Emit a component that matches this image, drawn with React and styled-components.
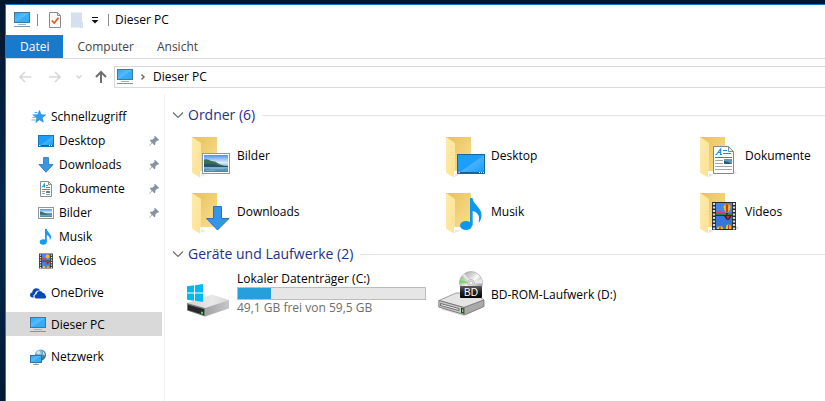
import React from "react";
import styled, { createGlobalStyle } from "styled-components";

const App = () => {
  const [selected, setSelected] = React.useState("Dieser PC");

  return (
    <Desktop>
      <GlobalStyle />
      <Gradients />
      <Window>
        <TitleBar>
          <PcIcon />
          <Separator />
          <ToolButton aria-label="Eigenschaften">
            <PropertiesIcon />
          </ToolButton>
          <ToolButton aria-label="Neuer Ordner">
            <NewFolderIcon />
          </ToolButton>
          <ToolButton aria-label="Symbolleiste anpassen" $narrow>
            <CustomizeIcon />
          </ToolButton>
          <Separator />
          <Title>Dieser PC</Title>
        </TitleBar>

        <Ribbon>
          <FileTab>Datei</FileTab>
          <Tab>Computer</Tab>
          <Tab>Ansicht</Tab>
        </Ribbon>

        <NavBar>
          <NavButton aria-label="Zurück" disabled>
            <ArrowIcon />
          </NavButton>
          <NavButton aria-label="Vorwärts" disabled>
            <ArrowIcon angle={180} />
          </NavButton>
          <NavButton aria-label="Zuletzt besucht" disabled $narrow>
            <ChevronIcon />
          </NavButton>
          <NavButton aria-label="Nach oben">
            <ArrowIcon angle={90} heavy />
          </NavButton>
          <AddressBar>
            <PcIcon />
            <CrumbArrow aria-label="Ordner anzeigen">
              <ChevronIcon angle={-90} />
            </CrumbArrow>
            <Crumb>Dieser PC</Crumb>
          </AddressBar>
        </NavBar>

        <Body>
          <Sidebar>
            {navGroups.map((group) => (
              <NavGroup key={group[0].name}>
                {group.map(({ name, Icon, nested, pinned }) => (
                  <li key={name}>
                    <NavItem
                      $nested={nested}
                      $active={selected === name}
                      onClick={() => setSelected(name)}
                    >
                      <Icon />
                      <NavLabel>{name}</NavLabel>
                      {pinned && <PinIcon />}
                    </NavItem>
                  </li>
                ))}
              </NavGroup>
            ))}
          </Sidebar>

          <Content>
            <Section>
              <SectionHeader title="Ordner (6)" />
              <Grid>
                {folders.map(({ name, Overlay }) => (
                  <Tile key={name}>
                    <FolderIcon>
                      <Overlay />
                    </FolderIcon>
                    <span>{name}</span>
                  </Tile>
                ))}
              </Grid>
            </Section>

            <Section>
              <SectionHeader title="Geräte und Laufwerke (2)" />
              <Grid>
                <Tile>
                  <HardDriveIcon />
                  <DriveInfo>
                    <span id="drive-c">Lokaler Datenträger (C:)</span>
                    <Usage aria-labelledby="drive-c" max={59.5} value={10.4} />
                    <FreeSpace>49,1 GB frei von 59,5 GB</FreeSpace>
                  </DriveInfo>
                </Tile>
                <Tile>
                  <BdDriveIcon />
                  <span>BD-ROM-Laufwerk (D:)</span>
                </Tile>
              </Grid>
            </Section>
          </Content>
        </Body>
      </Window>
    </Desktop>
  );
};

const SectionHeader = ({ title }) => (
  <Heading>
    <HeadingButton>
      <svg width="12" height="8" viewBox="0 0 12 8" aria-hidden="true">
        <path d="M1 1.500 6 6.500 11 1.500" fill="none" stroke="#6d6d6d" strokeWidth="1.2" />
      </svg>
      {title}
    </HeadingButton>
  </Heading>
);

/* ---------- icons ---------- */

const Small = ({ children }) => (
  <svg width="16" height="16" viewBox="0 0 16 16" aria-hidden="true">
    {children}
  </svg>
);

// fills shared by all icons
const Gradients = () => (
  <Defs aria-hidden="true">
    <defs>
      <linearGradient id="screen" x1="0" y1="0" x2="1" y2="1">
        <stop offset="0" stopColor="#2fa3f2" />
        <stop offset="0.5" stopColor="#57bdfb" />
        <stop offset="0.51" stopColor="#36aefa" />
        <stop offset="1" stopColor="#2fa9f8" />
      </linearGradient>
      <linearGradient id="desk" x1="0" y1="0" x2="1" y2="1">
        <stop offset="0" stopColor="#18a0fb" />
        <stop offset="0.5" stopColor="#1c9efc" />
        <stop offset="0.52" stopColor="#46b2fd" />
        <stop offset="1" stopColor="#1499f8" />
      </linearGradient>
      <linearGradient id="folderBack" x1="0" y1="0" x2="1" y2="1">
        <stop offset="0" stopColor="#e6c15e" />
        <stop offset="1" stopColor="#fbdf8c" />
      </linearGradient>
      <linearGradient id="folderFront" x1="0" y1="0" x2="1" y2="1">
        <stop offset="0" stopColor="#ffebad" />
        <stop offset="1" stopColor="#fde196" />
      </linearGradient>
      <linearGradient id="sky" x1="0" y1="0" x2="0" y2="1">
        <stop offset="0" stopColor="#4d92ed" />
        <stop offset="0.45" stopColor="#dcedfb" />
        <stop offset="0.6" stopColor="#9cc6e0" />
        <stop offset="1" stopColor="#3f83ad" />
      </linearGradient>
      <linearGradient id="diskTop" x1="0" y1="0" x2="1" y2="0">
        <stop offset="0" stopColor="#d2d2d3" />
        <stop offset="0.6" stopColor="#e9e9ea" />
        <stop offset="1" stopColor="#d6d6d8" />
      </linearGradient>
      <linearGradient id="diskSide" x1="0" y1="0" x2="1" y2="0">
        <stop offset="0" stopColor="#a3a3a5" />
        <stop offset="1" stopColor="#c6c6c8" />
      </linearGradient>
      <linearGradient id="disc" x1="0" y1="0" x2="1" y2="1">
        <stop offset="0" stopColor="#9a9a9a" />
        <stop offset="0.35" stopColor="#d5d5d5" />
        <stop offset="0.5" stopColor="#fafafa" />
        <stop offset="0.7" stopColor="#b5b5b5" />
        <stop offset="1" stopColor="#8b8b8b" />
      </linearGradient>
      <linearGradient id="badge" x1="0" y1="0" x2="0" y2="1">
        <stop offset="0" stopColor="#5c5c5c" />
        <stop offset="0.5" stopColor="#222222" />
        <stop offset="1" stopColor="#050505" />
      </linearGradient>
      <radialGradient id="globe" cx="0.4" cy="0.3" r="0.8">
        <stop offset="0" stopColor="#b9dcea" />
        <stop offset="0.5" stopColor="#4f92b4" />
        <stop offset="1" stopColor="#235f86" />
      </radialGradient>
    </defs>
  </Defs>
);

const PcIcon = () => (
  <Small>
    <rect x="0.5" y="0.5" width="15" height="10" fill="url(#screen)" stroke="#40799f" />
    <path d="M4 12.5h8" stroke="#9eb3c2" />
    <path d="M0 14.5h16" stroke="#7b96a9" />
  </Small>
);

const PropertiesIcon = () => (
  <Small>
    <path d="M2.5.5h8l3 3v12h-11z" fill="#fafafa" stroke="#8c8c8c" />
    <path d="M10.5.5v3h3" fill="none" stroke="#8c8c8c" />
    <path d="M4.8 8.5 7.2 11 11.5 5.8" fill="none" stroke="#e3591b" strokeWidth="1.8" />
  </Small>
);

const NewFolderIcon = () => (
  <Small>
    <path d="M2 0.500h11v10l1 1v4H2z" fill="#d5dfef" />
    <path d="M11.500 15.500v-4l2-1v5z" fill="#e8eef7" stroke="#c3d0e4" strokeWidth="0.6" />
  </Small>
);

const CustomizeIcon = () => (
  <svg width="8" height="8" viewBox="0 0 8 8" aria-hidden="true">
    <path d="M1 1.500h6" stroke="#111" />
    <path d="M0.500 4h7L4 7.500z" fill="#111" />
  </svg>
);

const ArrowIcon = ({ angle = 0, heavy }) => (
  <svg width="14" height="14" viewBox="0 0 14 14" aria-hidden="true">
    <path
      d="M13 7H2M7 2 2 7l5 5"
      fill="none"
      stroke="currentColor"
      strokeWidth={heavy ? 2 : 1.5}
      transform={`rotate(${angle} 7 7)`}
    />
  </svg>
);

const ChevronIcon = ({ angle = 0 }) => (
  <svg width="8" height="8" viewBox="0 0 8 8" aria-hidden="true">
    <path
      d="M1.500 2.500 4 5l2.500-2.500"
      fill="none"
      stroke="currentColor"
      strokeWidth="1.5"
      transform={`rotate(${angle} 4 4)`}
    />
  </svg>
);

const PinIcon = () => (
  <svg width="12" height="12" viewBox="0 0 12 12" aria-hidden="true">
    <path
      d="M7 .8 11.200 5 10 5.800 9.300 5.600 7.400 7.500 7.200 9.800 6.300 10.200 4.200 8 1.500 10.800 1 11 1.200 10.400 3.700 7.500 1.800 5.500 2.300 4.700 4.600 4.500 6.500 2.700 6.300 1.800z"
      fill="#8592a0"
    />
  </svg>
);

const StarIcon = () => (
  <Small>
    <path
      d="m9.500 1.500 1.600 4.200 4.500.2-3.500 2.900 1.300 4.400-3.900-2.400L5.800 13.500l1-4.500-3.500-3 4.600-.3z"
      fill="#2b9df0"
      stroke="#1d7fc9"
      strokeWidth="0.6"
    />
    <path d="M4.500 3.500h3M2.500 6h3M2.500 8.500h3M1.500 11h4" stroke="#5ab4f2" />
  </Small>
);

const DesktopIcon = () => (
  <Small>
    <rect x="0.5" y="2.500" width="15" height="11" fill="url(#desk)" stroke="#1577b7" />
    <path d="M1 12.500h14" stroke="#0f5f9b" />
    <path d="M1 12.500h1.500M11 12.500h1M13 12.500h1" stroke="#fff" />
  </Small>
);

const DownloadIcon = () => (
  <Small>
    <path
      d="M5.500 .5h5v7h4.600L8 15.200.9 7.500h4.600z"
      fill="#3a96e4"
      stroke="#2675bd"
      strokeWidth="0.8"
    />
  </Small>
);

const DocumentIcon = () => (
  <Small>
    <path d="M2.500.5h8l3 3v12h-11z" fill="#fff" stroke="#8c8f91" />
    <path d="M10.500.5v3h3" fill="none" stroke="#8c8f91" />
    <path d="m4 6.500 2.500-4v4M5 5.500h2M8 4.500h2M4 8.500h8M8 6.500h4" fill="none" stroke="#3195d8" />
    <path d="M4 10.500h3M4 12.500h3M8 13.500h4" stroke="#9a9a9a" />
    <rect x="8" y="10" width="4" height="2" fill="#52889f" />
  </Small>
);

const PictureIcon = () => (
  <Small>
    <rect x="0.5" y="2.500" width="15" height="11" fill="#fff" stroke="#8f979d" />
    <rect x="2" y="4" width="12" height="8" fill="url(#sky)" />
    <path d="M2 6.500c3 0 5 2 9 3H2z" fill="#3f7068" />
    <path d="M2 9h12" stroke="#2f6678" />
  </Small>
);

const MusicIcon = () => (
  <Small>
    <ellipse cx="5.200" cy="13" rx="3.500" ry="2.700" fill="#159af0" />
    <path
      d="M7 0h1.800c.3 3 4.200 4.500 4.200 8 0 1.500-.5 2.500-1.200 3.200.4-2.700-.8-4.300-3-5.200V13H7z"
      fill="#159af0"
    />
  </Small>
);

const VideoIcon = () => (
  <Small>
    <rect x="1" y="0.500" width="14" height="15" fill="#3b3b3b" />
    <rect x="4" y="1" width="8" height="6.500" fill="#5583cf" />
    <rect x="4" y="8.500" width="8" height="6.500" fill="#4b7ed4" />
    <path d="M2.500 1.500v14M13.500 1.500v14" stroke="#e8e8e8" strokeWidth="1.3" strokeDasharray="1.300 1.200" />
    <circle cx="9.500" cy="3.500" r="2" fill="#eeba24" />
    <path d="M4 5.500c2-1 4 0 5 1.500H4z" fill="#bd4a6a" />
    <path d="M8 9h3.500l-1.700 2.500z" fill="#a32a22" />
    <circle cx="6" cy="14" r="1.200" fill="#eeba24" />
    <circle cx="10" cy="14" r="1.200" fill="#e6a61f" />
  </Small>
);

const OneDriveIcon = () => (
  <Small>
    <path
      d="M4 12.500H2.600C1 12.500 0 11.400 0 10c0-1.300.9-2.300 2.200-2.500C2.200 5 4 3.300 6.300 3.300c1.700 0 3.100.9 3.800 2.200-3-.5-5 1.200-5.200 3.500C3.200 9.600 3 11.400 4 12.500z"
      fill="#094ab2"
    />
    <path
      d="M6.800 13.500c-1.400 0-2.300-.9-2.300-2.100s.9-2 2-2.100c0-2 1.400-3.300 3.200-3.300 1.500 0 2.600.8 3.100 2.100 1.700-.1 2.600 1.100 2.500 2.300.7.200.9.800.9 1.400 0 1-.7 1.700-1.700 1.700z"
      fill="#094ab2"
    />
  </Small>
);

const NetworkIcon = () => (
  <Small>
    <circle cx="10.500" cy="6" r="5.500" fill="url(#globe)" />
    <path d="M8 1.500c1.500 1 2.500 1 2 2.500S7 5 6 4.500zM13 2.500c1 1 2 2.500 2 4-1 0-2-1-2-2z" fill="#cfe8ee" />
    <rect x="0.500" y="6.500" width="11" height="7" fill="url(#screen)" stroke="#32749d" />
    <path d="M3 15.500h6" stroke="#8ba2b2" />
    <path d="M6 13.500v1.500" stroke="#8ba2b2" />
  </Small>
);

const FolderIcon = ({ children }) => (
  <svg width="48" height="48" viewBox="0 0 48 48" aria-hidden="true">
    <path d="M17 45l5-2.500-5-1z" fill="#e6e6e6" />
    <path d="M8 5h25v34H14z" fill="url(#folderBack)" />
    <path
      d="M8 5l8.500 5.500q.5.500.5 1.500v26l-1 1v6.500L8.500 41Q8 40.500 8 40z"
      fill="url(#folderFront)"
    />
    {children}
  </svg>
);

const PictureOverlay = () => (
  <>
    <rect x="18.500" y="21.500" width="27" height="20" fill="#fff" stroke="#8f979e" />
    <rect x="20" y="23" width="24" height="17" fill="url(#sky)" />
    <path d="M20 27.500q4-1 7 1.500 4-.5 8 3l5 2H20z" fill="#3b6f55" />
    <path d="M20 32q9-1 15 1.500l9 .5v1H20z" fill="#285364" />
    <path d="M26 36.500h14M22 38.500h9" stroke="#8db9cf" strokeWidth="0.6" />
  </>
);

const DesktopOverlay = () => (
  <>
    <rect x="19.500" y="22.500" width="27" height="19" fill="url(#desk)" stroke="#156a9f" />
    <path d="M20 40.500h26" stroke="#0d629d" />
    <path d="M20.500 40.500h1.200M41 40.500h1M43 40.500h1M45 40.500h1" stroke="#fff" />
  </>
);

const DocumentOverlay = () => (
  <>
    <path d="M42 39l3 2-2 1z" fill="#dedede" />
    <path d="M21.500 14.500h15l5 5v22h-20z" fill="#fff" stroke="#85898c" />
    <path d="M36.500 14.500v5h5z" fill="#e9ecee" stroke="#85898c" />
    <path
      d="M23.500 22.500h1.500M24.500 22.500l4.200-5.500v5.500M26 20.500h3M28 22.500h2"
      fill="none"
      stroke="#1c87cb"
      strokeWidth="1.1"
    />
    <path d="M31 18.500h4M31 21.500h8M23 25.500h17" stroke="#1c8fdb" />
    <path d="M23 28.500h8M23 31.500h8M23 34.500h17M23 37.500h17" stroke="#a6a6a6" />
    <rect x="32" y="27" width="8" height="5" fill="#5b9bc6" />
    <path d="M32 29q4 0 8 3h-8z" fill="#2f5f66" />
  </>
);

const DownloadOverlay = () => (
  <path d="M29.500 18.500h8v12h7.500L33.500 42 22.500 30.500h7z" fill="#3596e8" stroke="#2474b8" />
);

const MusicOverlay = () => (
  <>
    <ellipse cx="28" cy="37.500" rx="6" ry="4.500" fill="#0f97f0" />
    <path
      d="M32 10h2.500c.5 6 9 9.500 9 17 0 3-1 5.500-2.500 7.500q-.5-.5-.3-1c1.500-6-1.500-9.500-6-10.500V37.500H32z"
      fill="#0f97f0"
    />
  </>
);

const Balloon = ({ x, y }) => (
  <g transform={`translate(${x} ${y})`}>
    <path d="M-3.500 0a3.500 3.500 0 0 1 7 0Q3 3 1 5h-2Q-3 3-3.500 0z" fill="#f0c021" />
    <path d="M-1.300-3.200h2.600L1 5h-2z" fill="#c83c1f" />
    <rect x="-1" y="5.500" width="2" height="1.500" fill="#3a2a1a" />
  </g>
);

const VideoOverlay = () => (
  <>
    <path d="M44 38l3 2-3 2z" fill="#dedede" />
    <rect x="20" y="14" width="24" height="28" fill="#2b2b2b" />
    <path d="M22 15v27M42 15v27" stroke="#d9d9d9" strokeWidth="2.200" strokeDasharray="2 1.500" />
    <rect x="24" y="15" width="16" height="12" fill="#4187e8" />
    <rect x="24" y="28" width="16" height="13" fill="#3576dc" />
    <path d="M24 24q4-3 8 0t8 0v3H24z" fill="#c64a86" />
    <path d="M24 25.500h16V27H24z" fill="#3c7a3c" />
    <Balloon x={35} y={19.5} />
    <path d="M33 28h6l-2 4h-2z" fill="#b23327" />
    <path d="M32 28h2l2 4h-1zM38 28h1.500L37 32h-1z" fill="#2b1c3d" />
    <path d="M25 41a3 3 0 0 1 6 0zM34 41v-2a2.500 2.500 0 0 1 5 0v2z" fill="#f0c021" />
    <path d="M27.300 38.300h1.400V41h-1.400zM36 36.800h1.200V41H36z" fill="#c83c1f" />
  </>
);

const HardDriveIcon = () => (
  <svg width="48" height="48" viewBox="0 0 48 48" aria-hidden="true">
    <path d="M3 32l25-8.500L45 29l-24 8z" fill="url(#diskTop)" />
    <path d="M21 37l24-8v8.500l-24 8z" fill="url(#diskSide)" />
    <path d="M3 32l18 5v8.500L3 39.500z" fill="#77787b" />
    <path d="M4 33.700l16 4.500v5.700L4 38.900z" fill="#26282a" />
    <path d="M17 40.500l2 .6v2l-2-.6z" fill="#4be34b" />
    <path
      d="M3 15.300l7-1v7.200H3zM11 14.200l8-1.200v8.500h-8zM3 22.500h7v7.200l-7-1zM11 22.500h8V31l-8-1.200z"
      fill="#00b9f2"
    />
  </svg>
);

const BdDriveIcon = () => (
  <svg width="48" height="48" viewBox="0 0 48 48" aria-hidden="true">
    <path d="M2 38l24 7 20-9v-3z" fill="#d8d8d8" />
    <path d="M1 29.500L18 22h18l10 7-20 7.500z" fill="#e4e4e4" stroke="#8a8a8a" strokeWidth="0.8" />
    <path d="M26 36.500L46 29v6.500L27.500 43.500 26 43.300z" fill="#a9a9a9" stroke="#777" strokeWidth="0.8" />
    <path d="M.8 29.500L26 36.500v7L.8 36z" fill="#c9c9c9" stroke="#666" strokeWidth="0.8" />
    <path d="M2.500 32.500L21 37.500v2L2.500 34.500z" fill="#f5f5f5" stroke="#4b4b4b" strokeWidth="0.8" />
    <path d="M23 36.700l3 .8v5l-3-.8z" fill="#18391c" />
    <path d="M24 38l1.400.4v3L24 41z" fill="#6fe03d" />
    <circle cx="33" cy="12" r="11.500" fill="url(#disc)" stroke="#a0a0a0" strokeWidth="0.6" />
    <path d="M33 12L22 8.500q-.6 2-.5 4z" fill="#7ed968" />
    <path d="M33 12L24 4.800 26.500 2.500z" fill="#f7f7f7" opacity="0.7" />
    <path d="M33 12l10.500-4q1 2 1 4.500z" fill="#ece8f3" />
    <circle cx="33" cy="12" r="3.500" fill="#e2e2e2" stroke="#a8a8a8" strokeWidth="0.6" />
    <circle cx="33" cy="12" r="1.600" fill="#fff" stroke="#999" strokeWidth="0.5" />
    <rect x="22" y="15" width="22" height="12" rx="1" fill="url(#badge)" />
    <BadgeText x="33" y="24.500">
      BD
    </BadgeText>
  </svg>
);

/* ---------- data ---------- */

const navGroups = [
  [
    { name: "Schnellzugriff", Icon: StarIcon },
    { name: "Desktop", Icon: DesktopIcon, nested: true, pinned: true },
    { name: "Downloads", Icon: DownloadIcon, nested: true, pinned: true },
    { name: "Dokumente", Icon: DocumentIcon, nested: true, pinned: true },
    { name: "Bilder", Icon: PictureIcon, nested: true, pinned: true },
    { name: "Musik", Icon: MusicIcon, nested: true },
    { name: "Videos", Icon: VideoIcon, nested: true },
  ],
  [{ name: "OneDrive", Icon: OneDriveIcon }],
  [{ name: "Dieser PC", Icon: PcIcon }],
  [{ name: "Netzwerk", Icon: NetworkIcon }],
];

const folders = [
  { name: "Bilder", Overlay: PictureOverlay },
  { name: "Desktop", Overlay: DesktopOverlay },
  { name: "Dokumente", Overlay: DocumentOverlay },
  { name: "Downloads", Overlay: DownloadOverlay },
  { name: "Musik", Overlay: MusicOverlay },
  { name: "Videos", Overlay: VideoOverlay },
];

/* ---------- styles ---------- */

const GlobalStyle = createGlobalStyle`
  * {
    box-sizing: border-box;
  }
  body {
    margin: 0;
    overflow: hidden;
    font-family: "Open Sans", "Noto Sans", sans-serif;
    font-size: 12px;
    line-height: 16px;
    color: #000;
  }
  button {
    font: inherit;
    color: inherit;
    padding: 0;
    border: 0;
    background: none;
    white-space: nowrap;
  }
  svg {
    flex-shrink: 0;
  }
`;

const Defs = styled.svg`
  position: absolute;
  width: 0;
  height: 0;
`;

const Desktop = styled.div`
  display: flex;
  min-height: 100vh;
  padding: 4px 0 0 5px;
  background: linear-gradient(#03162f, #04284f 50%, #021a36);
`;

const Window = styled.div`
  flex: 1;
  min-width: 0;
  display: flex;
  flex-direction: column;
  background: #fff;
  border: solid #1979ca;
  border-width: 1px 0 0 1px;
`;

const TitleBar = styled.header`
  display: flex;
  align-items: center;
  height: 30px;
  padding-left: 8px;
`;

const Separator = styled.span`
  width: 1px;
  height: 12px;
  margin: 0 6px 0 7px;
  background: #8a8a8a;
`;

const ToolButton = styled.button`
  display: flex;
  justify-content: center;
  align-items: center;
  width: ${(props) => (props.$narrow ? "13px" : "22px")};
  height: 22px;
`;

const Title = styled.h1`
  margin: 0;
  font-size: 12px;
  font-weight: 400;
`;

const Ribbon = styled.nav`
  display: flex;
  height: 24px;
  border-bottom: 1px solid #dadbdc;
`;

const Tab = styled.button`
  padding: 1px 9px 0 14px;
  color: #444;
`;

const FileTab = styled(Tab)`
  padding-right: 14px;
  background: #1979ca;
  color: #fff;
`;

const NavBar = styled.div`
  display: flex;
  align-items: center;
  height: 35px;
  padding-left: 4px;
`;

const NavButton = styled.button`
  display: flex;
  justify-content: center;
  width: ${(props) => (props.$narrow ? "18px" : "30px")};
  color: #6e6e6e;
  &:disabled {
    color: #d6d6d6;
  }
  &:last-of-type {
    width: 26px;
  }
`;

const AddressBar = styled.div`
  flex: 1;
  display: flex;
  align-items: center;
  gap: 6px;
  height: 22px;
  padding-left: 2px;
  border: 1px solid #d9d9d9;
  border-right: 0;
`;

const Crumb = styled.button`
  display: flex;
`;

const CrumbArrow = styled(Crumb)`
  color: #6e6e6e;
`;

const Body = styled.div`
  flex: 1;
  display: flex;
`;

const Sidebar = styled.nav`
  flex: 0 0 159px;
  display: flex;
  flex-direction: column;
  gap: 8px;
  padding: 10px 2px 0 0;
  border-right: 1px solid #f0f0f0;
`;

const NavGroup = styled.ul`
  margin: 0;
  padding: 0;
  list-style: none;
`;

const NavItem = styled.button`
  display: flex;
  align-items: center;
  gap: 5px;
  width: 100%;
  height: 24px;
  padding: 2px 2px 0 ${(props) => (props.$nested ? "32px" : "24px")};
  background: ${(props) => (props.$active ? "#d9d9d9" : "none")};
`;

const NavLabel = styled.span`
  flex: 1;
  text-align: left;
`;

const Content = styled.main`
  flex: 1;
  min-width: 0;
  display: flex;
  flex-direction: column;
  gap: 6px;
  padding: 9px 0 0 7px;
  overflow: hidden;
`;

const Section = styled.section`
  display: flex;
  flex-direction: column;
  gap: 5px;
`;

const Heading = styled.h2`
  display: flex;
  align-items: center;
  gap: 7px;
  height: 24px;
  margin: 0;
  font-size: 14px;
  font-weight: 400;
  color: #1e3287;
  &::after {
    content: "";
    flex: 1;
    height: 1px;
    background: #e2e2e2;
  }
`;

const HeadingButton = styled.button`
  display: flex;
  align-items: center;
  gap: 4px;
`;

const Grid = styled.div`
  display: grid;
  grid-template-columns: repeat(3, 246px);
  gap: 8px;
  padding-left: 12px;
`;

const Tile = styled.button`
  display: flex;
  align-items: center;
  gap: 5px;
  height: 48px;
  text-align: left;
`;

const DriveInfo = styled.span`
  display: flex;
  flex-direction: column;
  padding-bottom: 3px;
`;

const Usage = styled.progress`
  appearance: none;
  width: 189px;
  height: 13px;
  border: 1px solid #bcbcbc;
  background: #e6e6e6;
  &::-webkit-progress-bar {
    background: #e6e6e6;
  }
  &::-webkit-progress-value {
    background: #26a0da;
  }
`;

const FreeSpace = styled.span`
  color: #6d6d6d;
`;

const BadgeText = styled.text`
  font-family: "Liberation Sans", sans-serif;
  font-size: 10px;
  text-anchor: middle;
  fill: #fff;
`;

export default App;
